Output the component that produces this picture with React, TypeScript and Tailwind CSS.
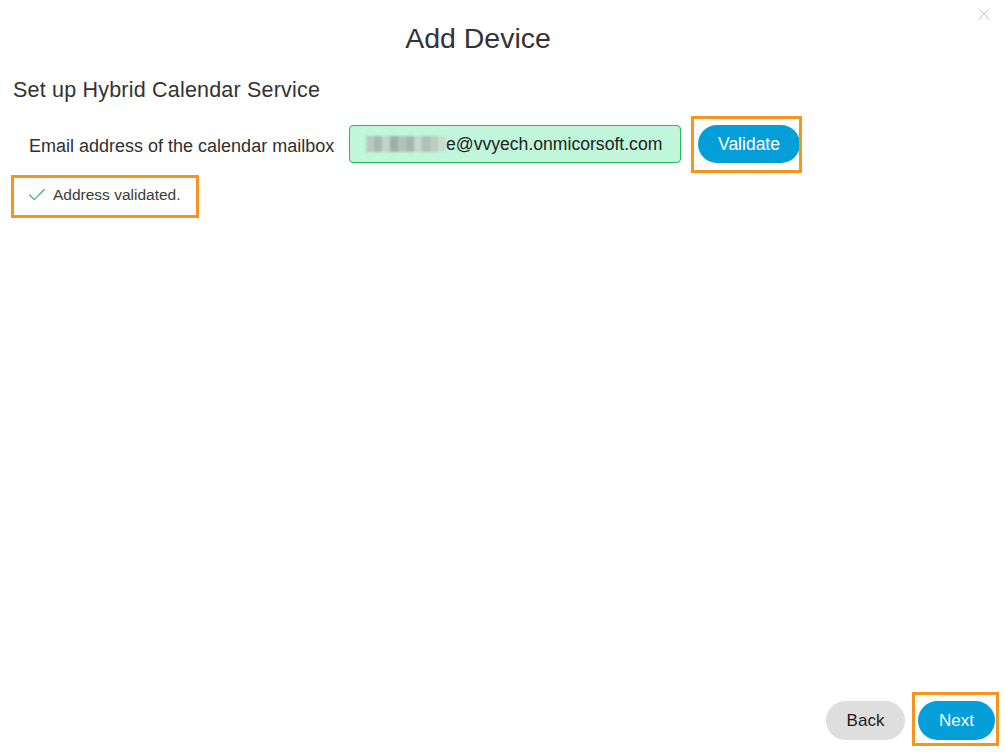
import { X, Check } from "lucide-react";

const font = { fontFamily: '"Liberation Sans", Arial, sans-serif' };

function Blurred() {
  // pixelated, redacted part of the mailbox name
  const blocks = [
    "bg-[#b9c9bf]", "bg-[#a9b8ae]", "bg-[#c2d3c8]", "bg-[#9fafa5]", "bg-[#b3c3b9]",
    "bg-[#a6b6ac]", "bg-[#c8d8ce]", "bg-[#b0c0b6]", "bg-[#bccdc2]", "bg-[#c9ddd1]",
  ];
  return (
    <span className="inline-flex h-[16px] items-stretch blur-[1px]">
      {blocks.map((c, i) => (
        <span key={i} className={`w-[8px] ${c}`} />
      ))}
    </span>
  );
}

export default function App() {
  return (
    <div className="flex h-[752px] w-[1005px] flex-col bg-white text-[#2f2f2f]" style={font}>
      <div className="relative flex h-[76px] items-start justify-center pr-[49px] pt-[20px]">
        <h1 className="text-[28.5px] leading-[36px] text-[#333]">Add Device</h1>
        <button className="absolute right-[11px] top-[4px] text-[#c4c4c4]">
          <X size={20} strokeWidth={1.1} />
        </button>
      </div>

      <div className="px-[13px]">
        <h2 className="text-[21.5px] leading-[28px] tracking-[0.2px] text-[#333]">Set up Hybrid Calendar Service</h2>

        <div className="mt-[21px] flex items-center pl-[16px]">
          <label className="mt-[5px] w-[320px] text-[18px] text-[#2f2f2f]">Email address of the calendar mailbox</label>
          <div className="flex h-[38px] w-[332px] items-center rounded-[4px] border border-[#27b760] bg-[#c0f7da] pl-[16px] text-[17.6px] text-[#222]">
            <Blurred />
            <span>e@vvyech.onmicorsoft.com</span>
          </div>
          <div className="relative ml-[17px]">
            <button className="h-[38px] w-[102px] rounded-full bg-[#049fd9] text-[17.5px] text-white">Validate</button>
            <span className="pointer-events-none absolute -bottom-[10px] -left-[7px] -right-[2px] -top-[9px] border-[3px] border-[#f7941d]" />
          </div>
        </div>

        <div className="relative mt-[12px] inline-flex h-[43px] w-[188px] items-center pb-[3px] pl-[15px] -ml-[2px]">
          <Check size={22} strokeWidth={1.3} className="text-[#2fb866]" />
          <span className="ml-[5px] text-[15.5px] text-[#3a3a3a]">Address validated.</span>
          <span className="pointer-events-none absolute inset-0 border-[3px] border-[#f7941d]" />
        </div>
      </div>

      <div className="mt-auto flex justify-end gap-[13px] pb-[12px] pr-[10px]">
        <button className="h-[39px] w-[79px] rounded-full bg-[#dedede] text-[17px] text-[#1c1c1c]">Back</button>
        <div className="relative">
          <button className="h-[39px] w-[77px] rounded-full bg-[#049fd9] text-[17px] text-white">Next</button>
          <span className="pointer-events-none absolute -bottom-[6px] -left-[6px] -right-[4px] -top-[9px] border-[3px] border-[#f7941d]" />
        </div>
      </div>
    </div>
  );
}
